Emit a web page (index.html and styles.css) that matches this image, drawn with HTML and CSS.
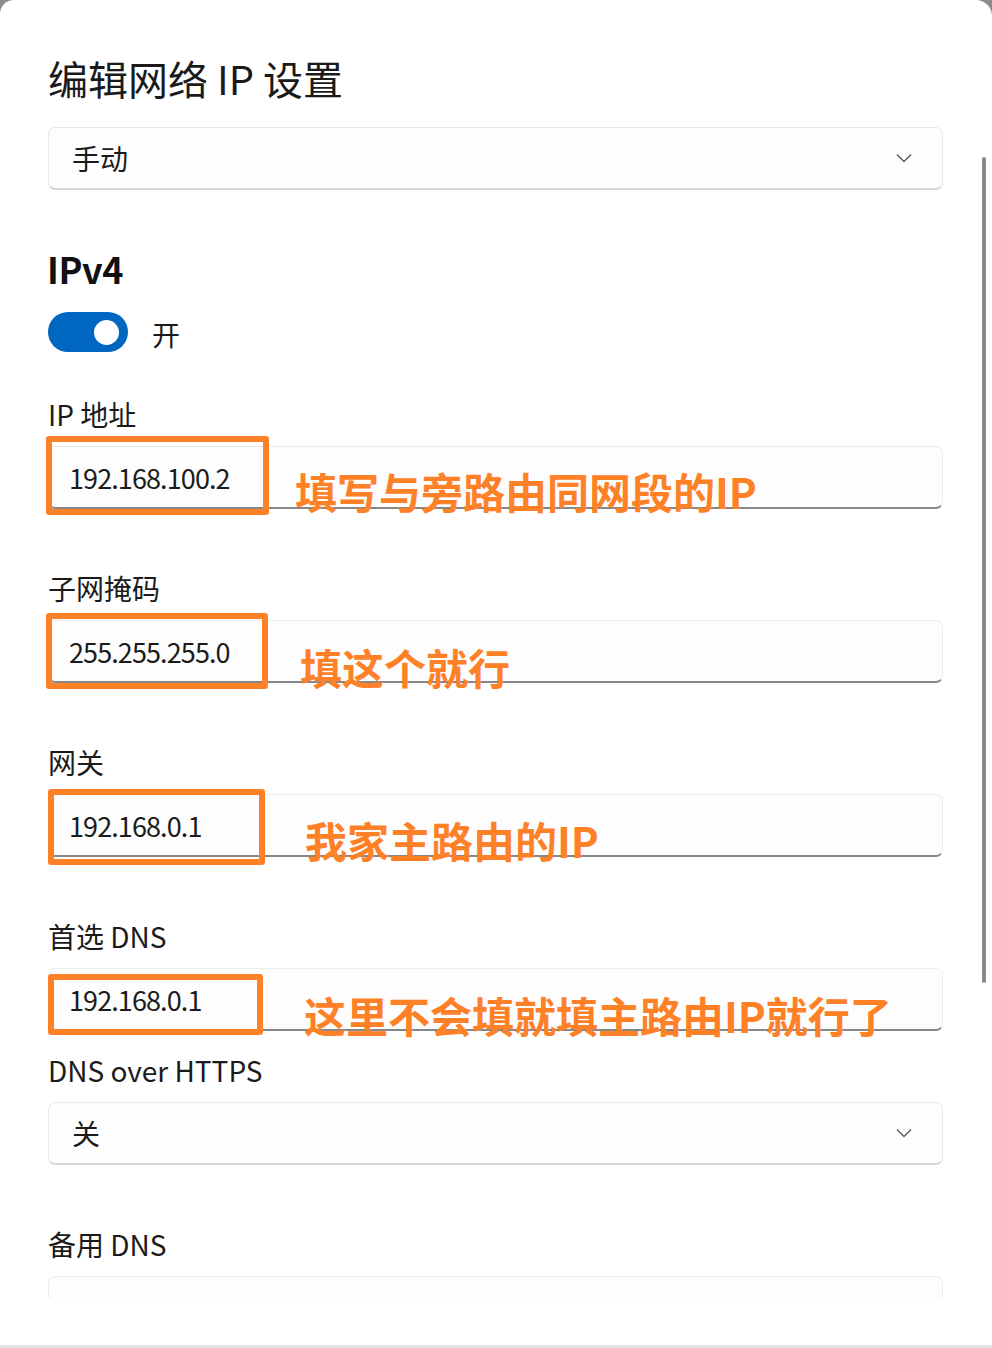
FILE: index.html
```html
<!DOCTYPE html>
<html lang="zh-CN">
<head>
<meta charset="utf-8">
<title>编辑网络 IP 设置</title>
<link rel="stylesheet" href="styles.css">
</head>
<body>
<div class="window">
  <div class="content">
    <h1 class="title">编辑网络 IP 设置</h1>
    <div class="select">
      <span>手动</span>
      <svg class="chev" width="16" height="10" viewBox="0 0 16 10"><path d="M1 1.5 L8 8.5 L15 1.5" fill="none" stroke="#5c5c5c" stroke-width="1.4"/></svg>
    </div>

    <h2 class="section">IPv4</h2>
    <div class="toggle-row">
      <div class="toggle"><div class="knob"></div></div>
      <span class="toggle-label">开</span>
    </div>

    <div class="group">
      <div class="label">IP 地址</div>
      <div class="input">
        <span class="value">192.168.100.2</span>
        <div class="mark m1"></div>
        <div class="note n1">填写与旁路由同网段的IP</div>
      </div>
    </div>

    <div class="group">
      <div class="label">子网掩码</div>
      <div class="input">
        <span class="value">255.255.255.0</span>
        <div class="mark m2"></div>
        <div class="note n2">填这个就行</div>
      </div>
    </div>

    <div class="group">
      <div class="label">网关</div>
      <div class="input">
        <span class="value">192.168.0.1</span>
        <div class="mark m3"></div>
        <div class="note n3">我家主路由的IP</div>
      </div>
    </div>

    <div class="group tight">
      <div class="label">首选 DNS</div>
      <div class="input">
        <span class="value">192.168.0.1</span>
        <div class="mark m4"></div>
        <div class="note n4">这里不会填就填主路由IP就行了</div>
      </div>
    </div>

    <div class="group">
      <div class="label">DNS over HTTPS</div>
      <div class="select">
        <span>关</span>
        <svg class="chev" width="16" height="10" viewBox="0 0 16 10"><path d="M1 1.5 L8 8.5 L15 1.5" fill="none" stroke="#5c5c5c" stroke-width="1.4"/></svg>
      </div>
    </div>

    <div class="group">
      <div class="label">备用 DNS</div>
      <div class="input"></div>
    </div>

    <div class="scrollbar"></div>
  </div>
  <div class="footer"></div>
  <div class="footer-bar"></div>
</div>
</body>
</html>
```

FILE: styles.css
```css
html, body {
  margin: 0;
  padding: 0;
}
body {
  background: #8c8c8c;
  font-family: "Noto Sans CJK SC", "Noto Sans", sans-serif;
  color: #1b1b1b;
}
.window {
  width: 992px;
  height: 1348px;
  background: #ffffff;
  border-radius: 14px 16px 0 0;
  display: flex;
  flex-direction: column;
  overflow: hidden;
}
.content {
  position: relative;
  height: 1298px;
  box-sizing: border-box;
  padding: 52px 49px 0 48px;
  overflow: hidden;
  display: flex;
  flex-direction: column;
  flex-shrink: 0;
}
.content > * {
  flex-shrink: 0;
}
.title {
  margin: 0;
  font-size: 40px;
  line-height: 52px;
  font-weight: 400;
  color: #1a1a1a;
}
.select {
  flex-shrink: 0;
  margin-top: 23px;
  height: 63px;
  box-sizing: border-box;
  border: 1px solid #e9e9e9;
  border-bottom: 2px solid #d6d6d6;
  border-radius: 7px;
  background: #fdfdfd;
  display: flex;
  align-items: center;
  justify-content: space-between;
  padding: 0 30px 0 23px;
  font-size: 28px;
}
.group .select {
  margin-top: 14px;
}
.chev {
  display: block;
}
.section {
  margin: 54px 0 0 -1px;
  font-size: 36px;
  line-height: 48px;
  font-weight: 700;
  letter-spacing: -0.5px;
  color: #111;
}
.toggle-row {
  margin-top: 20px;
  display: flex;
  align-items: center;
  gap: 24px;
  height: 40px;
}
.toggle {
  width: 80px;
  height: 40px;
  border-radius: 20px;
  background: #0067c0;
  display: flex;
  align-items: center;
  justify-content: flex-end;
  padding-right: 9px;
  box-sizing: border-box;
}
.knob {
  width: 25px;
  height: 25px;
  border-radius: 50%;
  background: #ffffff;
}
.toggle-label {
  font-size: 28px;
  line-height: 40px;
  padding-top: 4px;
}
.group {
  margin-top: 44px;
  display: flex;
  flex-direction: column;
}
.group > * {
  flex-shrink: 0;
}
.group + .group {
  margin-top: 61px;
}
.group.tight + .group {
  margin-top: 21px;
}
.label {
  font-size: 28px;
  line-height: 36px;
}
.input {
  position: relative;
  margin-top: 14px;
  height: 63px;
  box-sizing: border-box;
  border: 1px solid #ececec;
  border-bottom: 2px solid #878787;
  border-radius: 7px;
  background: #fdfdfd;
  display: flex;
  align-items: center;
  padding-left: 20px;
  font-size: 28px;
}
.value {
  font-size: 27px;
  letter-spacing: -0.9px;
}
.mark {
  position: absolute;
  box-sizing: border-box;
  border: 6px solid #fe8128;
  border-radius: 3px;
}
.m1 { left: -3px; top: -11px; width: 223px; height: 79px; }
.m2 { left: -3px; top: -8px; width: 222px; height: 76px; }
.m3 { left: -1px; top: -6px; width: 217px; height: 76px; }
.m4 { left: -1px; top: 5px; width: 215px; height: 61px; }
.note {
  position: absolute;
  font-size: 42px;
  line-height: 42px;
  font-weight: 700;
  color: #fe8128;
  white-space: nowrap;
}
.n1 { left: 246px; top: 23px; }
.n2 { left: 251px; top: 25px; }
.n3 { left: 256px; top: 24px; }
.n4 { left: 255px; top: 25px; }
.scrollbar {
  position: absolute;
  left: 982px;
  top: 157px;
  width: 4px;
  height: 826px;
  border-radius: 2px;
  background: #8a8a8a;
}
.footer {
  height: 47px;
  background: #ffffff;
  flex-shrink: 0;
}
.footer-bar {
  flex: 1;
  background: #e4e4e4;
}
```
